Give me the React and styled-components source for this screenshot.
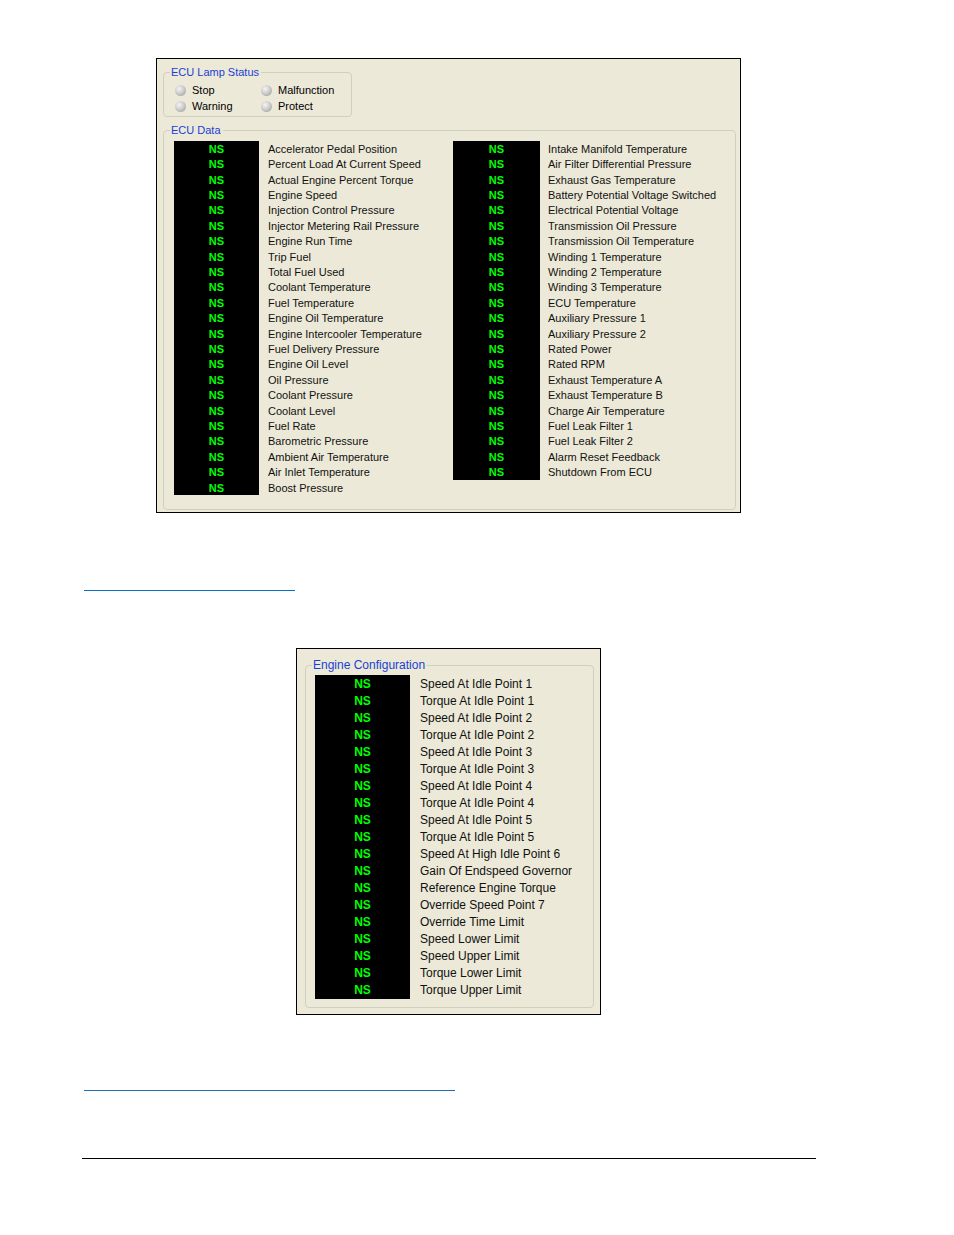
import React from "react";
import styled, { createGlobalStyle } from "styled-components";

const Global = createGlobalStyle`
  html, body { margin: 0; padding: 0; background: #fff; }
  body { font-family: "Liberation Sans", Arial, sans-serif; }
`;

const Page = styled.div`
  width: 954px;
  height: 1235px;
  display: flex;
  flex-direction: column;
  align-items: flex-start;
  padding-top: 58px;
  box-sizing: border-box;
`;

const Panel = styled.div`
  margin-left: ${(p) => p.$left}px;
  margin-top: ${(p) => p.$top || 0}px;
  width: ${(p) => p.$w}px;
  height: ${(p) => p.$h}px;
  box-sizing: border-box;
  border: 1px solid #000;
  background: #ece9d8;
  display: flex;
  flex-direction: column;
  align-items: flex-start;
  padding: ${(p) => p.$pad};
`;

const Group = styled.fieldset`
  margin: ${(p) => p.$margin || "0"};
  padding: 0;
  width: ${(p) => p.$w}px;
  height: ${(p) => p.$h}px;
  box-sizing: border-box;
  border: 1px solid #d0d0bf;
  border-radius: 4px;
  min-width: 0;
`;

const Legend = styled.legend`
  margin-left: ${(p) => p.$ml || 6}px;
  padding: 0 2px 0 1px;
  font-size: ${(p) => p.$fs || 11}px;
  line-height: 13px;
  color: #1a3fd6;
`;

const GroupBody = styled.div`
  padding: ${(p) => p.$pad};
`;

const LampGrid = styled.div`
  display: grid;
  grid-template-columns: 86px auto;
  grid-auto-rows: 16px;
`;

const Lamp = styled.div`
  display: flex;
  align-items: center;
  gap: 6px;
  font-size: 11px;
  color: #000;
`;

const Bulb = styled.span`
  width: 11px;
  height: 11px;
  margin-left: -1px;
  border-radius: 50%;
  background: radial-gradient(circle at 38% 35%, #f4f4f4 0%, #d2d2d2 40%, #aaaaaa 80%, #959595 100%);
`;

const Columns = styled.div`
  display: flex;
  align-items: flex-start;
`;

const DataList = styled.div`
  width: ${(p) => p.$w}px;
  display: flex;
  flex-direction: column;
`;

const Row = styled.div`
  display: grid;
  grid-template-columns: ${(p) => p.$box}px 1fr;
  column-gap: ${(p) => p.$gap}px;
  height: ${(p) => p.$rh}px;
  align-items: center;
`;

const Status = styled.div`
  background: #000;
  height: 100%;
  display: flex;
  align-items: center;
  justify-content: center;
  color: #00ff00;
  font-weight: bold;
  font-size: ${(p) => p.$fs}px;
`;

const Label = styled.div`
  font-size: ${(p) => p.$fs}px;
  color: #111;
  white-space: nowrap;
`;

const Rule = styled.div`
  margin-left: ${(p) => p.$left}px;
  margin-top: ${(p) => p.$top}px;
  width: ${(p) => p.$w}px;
  height: ${(p) => p.$h || 1}px;
  background: ${(p) => p.$color};
`;

const leftItems = [
  "Accelerator Pedal Position",
  "Percent Load At Current Speed",
  "Actual Engine Percent Torque",
  "Engine Speed",
  "Injection Control Pressure",
  "Injector Metering Rail Pressure",
  "Engine Run Time",
  "Trip Fuel",
  "Total Fuel Used",
  "Coolant Temperature",
  "Fuel Temperature",
  "Engine Oil Temperature",
  "Engine Intercooler Temperature",
  "Fuel Delivery Pressure",
  "Engine Oil Level",
  "Oil Pressure",
  "Coolant Pressure",
  "Coolant Level",
  "Fuel Rate",
  "Barometric Pressure",
  "Ambient Air Temperature",
  "Air Inlet Temperature",
  "Boost Pressure",
];

const rightItems = [
  "Intake Manifold Temperature",
  "Air Filter Differential Pressure",
  "Exhaust Gas Temperature",
  "Battery Potential Voltage Switched",
  "Electrical Potential Voltage",
  "Transmission Oil Pressure",
  "Transmission Oil Temperature",
  "Winding 1 Temperature",
  "Winding 2 Temperature",
  "Winding 3 Temperature",
  "ECU Temperature",
  "Auxiliary Pressure 1",
  "Auxiliary Pressure 2",
  "Rated Power",
  "Rated RPM",
  "Exhaust Temperature A",
  "Exhaust Temperature B",
  "Charge Air Temperature",
  "Fuel Leak Filter 1",
  "Fuel Leak Filter 2",
  "Alarm Reset Feedback",
  "Shutdown From ECU",
];

const configItems = [
  "Speed At Idle Point 1",
  "Torque At Idle Point 1",
  "Speed At Idle Point 2",
  "Torque At Idle Point 2",
  "Speed At Idle Point 3",
  "Torque At Idle Point 3",
  "Speed At Idle Point 4",
  "Torque At Idle Point 4",
  "Speed At Idle Point 5",
  "Torque At Idle Point 5",
  "Speed At High Idle Point 6",
  "Gain Of Endspeed Governor",
  "Reference Engine Torque",
  "Override Speed Point 7",
  "Override Time Limit",
  "Speed Lower Limit",
  "Speed Upper Limit",
  "Torque Lower Limit",
  "Torque Upper Limit",
];

function List({ items, w, box, gap, rh, fs }) {
  return (
    <DataList $w={w}>
      {items.map((t) => (
        <Row key={t} $box={box} $gap={gap} $rh={rh}>
          <Status $fs={fs}>NS</Status>
          <Label $fs={fs}>{t}</Label>
        </Row>
      ))}
    </DataList>
  );
}

export default function App() {
  return (
    <>
      <Global />
      <Page>
        <Panel $left={156} $w={585} $h={455} $pad="0 0 0 6px">
          <Group $w={189} $h={51} $margin="7px 0 0 0">
            <Legend>ECU Lamp Status</Legend>
            <GroupBody $pad="3px 0 0 12px">
              <LampGrid>
                <Lamp><Bulb />Stop</Lamp>
                <Lamp><Bulb />Malfunction</Lamp>
                <Lamp><Bulb />Warning</Lamp>
                <Lamp><Bulb />Protect</Lamp>
              </LampGrid>
            </GroupBody>
          </Group>
          <Group $w={573} $h={386} $margin="7px 0 0 0">
            <Legend>ECU Data</Legend>
            <GroupBody $pad="4px 0 0 10px">
              <Columns>
                <List items={leftItems} w={279} box={85} gap={9} rh={15.42} fs={11} />
                <List items={rightItems} w={280} box={87} gap={8} rh={15.42} fs={11} />
              </Columns>
            </GroupBody>
          </Group>
        </Panel>
        <Rule $left={84} $top={77} $w={211} $color="#0a6fc7" />
        <Panel $left={296} $top={57} $w={305} $h={367} $pad="0 0 0 8px">
          <Group $w={289} $h={349} $margin="10px 0 0 0">
            <Legend $fs={12} $ml={6}>Engine Configuration</Legend>
            <GroupBody $pad="3px 0 0 9px">
              <List items={configItems} w={270} box={95} gap={10} rh={17.05} fs={12} />
            </GroupBody>
          </Group>
        </Panel>
        <Rule $left={84} $top={75} $w={371} $color="#1f6fb5" />
        <Rule $left={82} $top={67} $w={734} $color="#000" />
      </Page>
    </>
  );
}
